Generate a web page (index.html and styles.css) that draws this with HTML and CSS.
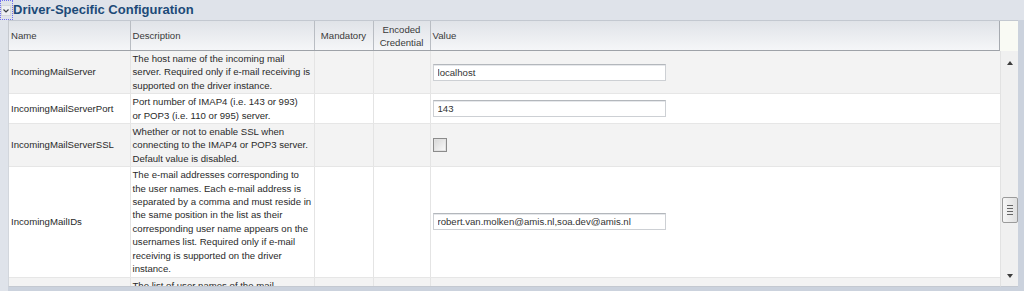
FILE: index.html
```html
<!DOCTYPE html>
<html lang="en">
<head>
  <meta charset="UTF-8" />
  <title>Driver-Specific Configuration</title>
  <link rel="stylesheet" href="styles.css">
</head>
<body>
  <div class="title-bar">
    <span class="disclose">
      <svg width="13" height="20" viewBox="0 0 13 20">
        <rect x="1.5" y="5.5" width="9" height="10" fill="#eef0f3" stroke="#d4d7dc" />
        <path d="M3.5 9.5 L6 12 L8.5 9.5" fill="none" stroke="#3a3f46" stroke-width="1.2" />
      </svg>
    </span>
    <h2>Driver-Specific Configuration</h2>
  </div>

  <div class="frame">
    <div class="panel">
      <div class="grid-head">
        <table class="grid">
          <colgroup>
            <col class="c-name"><col class="c-desc"><col class="c-mand"><col class="c-enc"><col>
          </colgroup>
          <tr>
            <th>Name</th>
            <th>Description</th>
            <th class="center">Mandatory</th>
            <th class="center">Encoded<br>Credential</th>
            <th>Value</th>
          </tr>
        </table>
      </div>
      <div class="corner"></div>

      <div class="grid-body">
        <table class="grid">
          <colgroup>
            <col class="c-name"><col class="c-desc"><col class="c-mand"><col class="c-enc"><col>
          </colgroup>
          <tr class="odd">
            <td>IncomingMailServer</td>
            <td class="desc">The host name of the incoming mail<br>server. Required only if e-mail receiving is<br>supported on the driver instance.</td>
            <td></td><td></td>
            <td class="val"><input type="text" value="localhost"></td>
          </tr>
          <tr>
            <td>IncomingMailServerPort</td>
            <td class="desc">Port number of IMAP4 (i.e. 143 or 993)<br>or POP3 (i.e. 110 or 995) server.</td>
            <td></td><td></td>
            <td class="val"><input type="text" value="143"></td>
          </tr>
          <tr class="odd">
            <td>IncomingMailServerSSL</td>
            <td class="desc">Whether or not to enable SSL when<br>connecting to the IMAP4 or POP3 server.<br>Default value is disabled.</td>
            <td></td><td></td>
            <td class="val"><span class="check"></span></td>
          </tr>
          <tr>
            <td>IncomingMailIDs</td>
            <td class="desc">The e-mail addresses corresponding to<br>the user names. Each e-mail address is<br>separated by a comma and must reside in<br>the same position in the list as their<br>corresponding user name appears on the<br>usernames list. Required only if e-mail<br>receiving is supported on the driver<br>instance.</td>
            <td></td><td></td>
            <td class="val"><input type="text" value="robert.van.molken@amis.nl,soa.dev@amis.nl"></td>
          </tr>
          <tr class="odd last">
            <td></td>
            <td class="desc">The list of user names of the mail</td>
            <td></td><td></td>
            <td class="val"></td>
          </tr>
        </table>
      </div>

      <div class="scrollbar">
        <span class="arrow up"></span>
        <span class="thumb"><i></i><i></i><i></i><i></i></span>
        <span class="arrow down"></span>
      </div>
    </div>
  </div>
</body>
</html>
```

FILE: styles.css
```css
body {
  margin: 0;
  background: #dfe3ea;
  font-family: "Liberation Sans", Arial, sans-serif;
  color: #333;
  height: 291px;
  overflow: hidden;
}
.title-bar {
  display: flex;
  align-items: flex-start;
  height: 20px;
}
.disclose {
  display: block;
  width: 13px;
  height: 20px;
  outline: 1px dotted #6f6ff0;
  outline-offset: -1px;
}
.disclose svg {
  display: block;
}
.title-bar h2 {
  margin: 0;
  padding-top: 2px;
  font-size: 13px;
  line-height: 16px;
  color: #1c4a78;
}
.frame {
  margin-left: 8px;
  padding: 0 6px 4px 0;
  background: #cbd2dd;
}
.panel {
  display: grid;
  grid-template-columns: 992px 18px;
  grid-template-rows: 30px 236px;
  border-top: 1px solid #c3c8d0;
  background: #fff;
}
.grid {
  width: 992px;
  border-collapse: collapse;
  table-layout: fixed;
  font-size: 9.6px;
}
.c-name { width: 121px; }
.c-desc { width: 184px; }
.c-mand { width: 59px; }
.c-enc { width: 57px; }

.grid-head {
  background: linear-gradient(#e0e3e8, #f5f6f8);
  border-bottom: 1px solid #9ea2a8;
  border-left: 1px solid #c6cad0;
  border-right: 1px solid #a6aab0;
  box-sizing: border-box;
  overflow: hidden;
}
.grid-head .grid {
  width: 990px;
}
.grid th {
  height: 29px;
  padding: 0 2px;
  font-weight: normal;
  text-align: left;
  line-height: 13px;
  color: #3a3a3a;
  border-left: 1px solid #b9bdc3;
}
.grid th:first-child {
  border-left: 0;
}
.grid th.center {
  text-align: center;
}
.corner {
  background: #f9faf4;
}

.grid-body {
  overflow: hidden;
  border-left: 1px solid #d2d6dc;
  border-bottom: 1px solid #c4c9d1;
}
.grid td {
  padding: 1px 2px;
  line-height: 13.4px;
  vertical-align: middle;
  border-bottom: 1px solid #e6e6e6;
  border-left: 1px solid #e4e4e4;
  color: #2a2a2a;
  white-space: nowrap;
}
.grid td:first-child {
  border-left: 0;
}
.grid tr.odd td {
  background: #f3f3f3;
}
.grid tr.last td {
  vertical-align: top;
  height: 40px;
}
.grid td.val {
  padding-left: 2px;
}
.val input {
  display: block;
  width: 233px;
  height: 17px;
  box-sizing: border-box;
  margin: 0;
  padding: 0 4px;
  border: 1px solid #cdd0d4;
  border-top-color: #b3b7bc;
  box-shadow: inset 0 1px 0 #e6e8eb;
  background: #fff;
  font-family: "Liberation Sans", Arial, sans-serif;
  font-size: 9.6px;
  color: #333;
}
.check {
  display: block;
  width: 14px;
  height: 14px;
  box-sizing: border-box;
  border: 1px solid #8b8b8b;
  box-shadow: inset 0 0 0 1px #e2e2e2;
  background: linear-gradient(135deg, #d6d6d6, #fbfbfb);
}

.scrollbar {
  position: relative;
  background: #f0f0f0;
  border-left: 1px solid #e2e2e2;
  border-bottom: 1px solid #c4c9d1;
}
.arrow {
  position: absolute;
  left: 6px;
  width: 0;
  height: 0;
  border-left: 3px solid transparent;
  border-right: 3px solid transparent;
}
.arrow.up {
  top: 10px;
  border-bottom: 4px solid #3c3c3c;
}
.arrow.down {
  bottom: 8px;
  border-top: 4px solid #3c3c3c;
}
.thumb {
  position: absolute;
  top: 146px;
  left: 1px;
  width: 16px;
  height: 26px;
  box-sizing: border-box;
  border: 1px solid #9b9b9b;
  border-radius: 2px;
  background: linear-gradient(90deg, #f6f6f6, #e0e0e0);
  display: flex;
  flex-direction: column;
  align-items: center;
  justify-content: center;
  gap: 2px;
}
.thumb i {
  display: block;
  width: 6px;
  height: 1px;
  background: #666;
}
```
